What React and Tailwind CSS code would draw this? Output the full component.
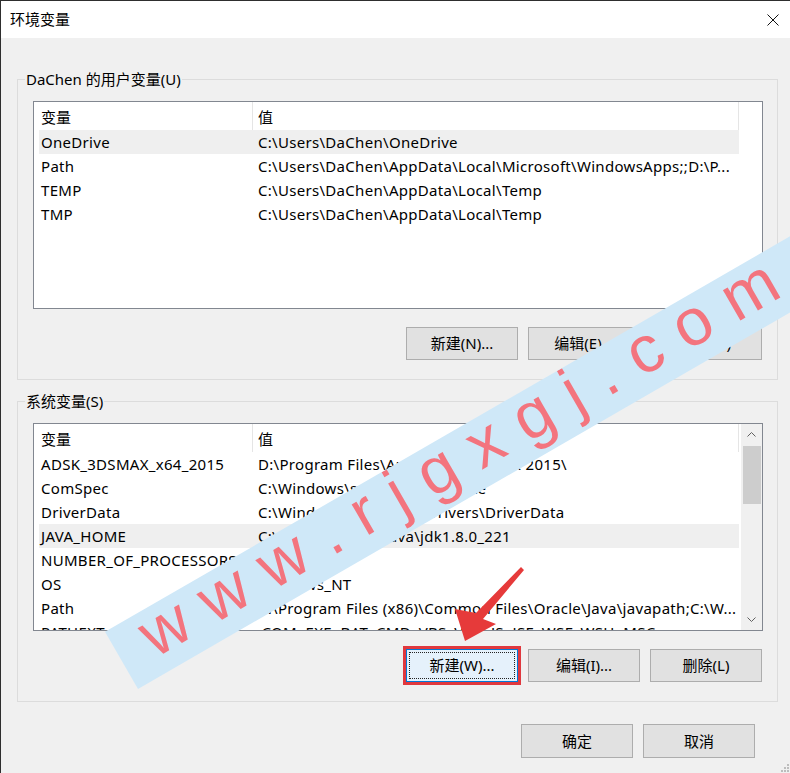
import React from "react";

const userVars = [
  ["OneDrive", "C:\\Users\\DaChen\\OneDrive"],
  ["Path", "C:\\Users\\DaChen\\AppData\\Local\\Microsoft\\WindowsApps;;D:\\P..."],
  ["TEMP", "C:\\Users\\DaChen\\AppData\\Local\\Temp"],
  ["TMP", "C:\\Users\\DaChen\\AppData\\Local\\Temp"],
];

const sysVars = [
  ["ADSK_3DSMAX_x64_2015", "D:\\Program Files\\Autodesk\\3ds Max 2015\\"],
  ["ComSpec", "C:\\Windows\\system32\\cmd.exe"],
  ["DriverData", "C:\\Windows\\System32\\Drivers\\DriverData"],
  ["JAVA_HOME", "C:\\Program Files\\Java\\jdk1.8.0_221"],
  ["NUMBER_OF_PROCESSORS", "4"],
  ["OS", "Windows_NT"],
  ["Path", "C:\\Program Files (x86)\\Common Files\\Oracle\\Java\\javapath;C:\\W..."],
  ["PATHEXT", ".COM;.EXE;.BAT;.CMD;.VBS;.VBE;.JS;.JSE;.WSF;.WSH;.MSC"],
];

const Chevron = ({ up }) => (
  <svg width="9" height="5" viewBox="0 0 9 5" className="block">
    <polyline
      points={up ? "0.5,4.5 4.5,0.5 8.5,4.5" : "0.5,0.5 4.5,4.5 8.5,0.5"}
      fill="none"
      stroke="#606060"
      strokeWidth="1"
    />
  </svg>
);

const Scrollbar = () => (
  <div className="w-[21px] h-full bg-[#f0f0f0] flex flex-col items-center">
    <div className="h-[21px] w-full flex items-center justify-center">
      <Chevron up />
    </div>
    <div className="w-[18px] h-[58px] mt-[1px] bg-[#cdcdcd]" />
    <div className="flex-1" />
    <div className="h-[21px] w-full flex items-center justify-center">
      <Chevron />
    </div>
  </div>
);

const ListView = ({ rows, selected, scroll }) => (
  <div className="h-[208px] border border-[#828790] bg-white overflow-hidden flex">
    <div className="flex-1 min-w-0">
      {/* Header */}
      <div className="flex h-[28px]">
        <div className="w-[219px] pl-[7px] pt-[2px] flex items-center border-r border-[#e5e5e5]">变量</div>
        <div className="w-[486px] pl-[5px] pt-[2px] flex items-center border-r border-[#e5e5e5]">值</div>
      </div>
      {rows.map(([name, value], i) => (
        <div
          key={name + i}
          className={`ml-[5px] w-[700px] h-[24px] flex items-center whitespace-nowrap tracking-[0.3px] ${
            i === selected ? "bg-[#efefef]" : ""
          }`}
        >
          <div className="w-[214px] pl-[2px] overflow-hidden">{name}</div>
          <div className="flex-1 pl-[5px] overflow-hidden">{value}</div>
        </div>
      ))}
    </div>
    {scroll && <Scrollbar />}
  </div>
);

const Button = ({ children, focused, className = "" }) => (
  <button
    className={`relative w-[112px] h-[33px] border ${
      focused
        ? "bg-[#e5f1fb] border-[#0078d7] outline-3 outline-[#e0383e]"
        : "bg-[#e1e1e1] border-[#adadad]"
    } ${className}`}
  >
    {focused && <span className="absolute inset-[2px] border border-dotted border-[#222]" />}
    <span className="relative">{children}</span>
  </button>
);

const GroupBox = ({ label, className = "", children }) => (
  <div className={`relative h-[301px] border border-[#dcdcdc] pl-[15px] pr-[14px] pt-[21px] ${className}`}>
    <span className="absolute -top-[12px] left-[7px] px-[1px] leading-[22px] bg-[#f0f0f0]">{label}</span>
    {children}
  </div>
);

export default function App() {
  return (
    <div className="w-[790px] h-[773px] relative overflow-hidden bg-[#f0f0f0] border-t border-l border-[#2e2e2e] text-[15px] text-black [font-family:'Noto_Sans','Noto_Sans_CJK_SC',sans-serif]">
      {/* Title bar */}
      <div className="h-[37px] bg-white flex items-center justify-between pl-[9px] pr-[11px]">
        <span className="[font-family:'Noto_Sans_CJK_SC',sans-serif]">环境变量</span>
        <svg width="12" height="12" viewBox="0 0 12 12">
          <path d="M0.5 0.5 L11.5 11.5 M11.5 0.5 L0.5 11.5" stroke="#111" strokeWidth="1" />
        </svg>
      </div>

      <div className="pl-[16px] pr-[12px] pt-[41px]">
        <GroupBox label="DaChen 的用户变量(U)">
          <ListView rows={userVars} selected={0} />
          <div className="flex justify-end gap-[10px] pr-[1px] mt-[18px]">
            <Button>新建(N)...</Button>
            <Button>编辑(E)...</Button>
            <Button>删除(D)</Button>
          </div>
        </GroupBox>

        <GroupBox label="系统变量(S)" className="mt-[21px]">
          <ListView rows={sysVars} selected={3} scroll />
          <div className="flex justify-end gap-[10px] pr-[1px] mt-[18px]">
            <Button focused>新建(W)...</Button>
            <Button>编辑(I)...</Button>
            <Button>删除(L)</Button>
          </div>
        </GroupBox>
      </div>

      <div className="flex justify-end gap-[10px] pr-[35px] mt-[22px]">
        <Button className="w-[111px] h-[34px]">确定</Button>
        <Button className="w-[111px] h-[34px]">取消</Button>
      </div>

      {/* resize grip */}
      <svg width="8" height="8" viewBox="0 0 8 8" className="absolute right-[1px] bottom-[1px]">
        {[[6, 0], [6, 3], [3, 3], [6, 6], [3, 6], [0, 6]].map(([x, y]) => (
          <rect key={`${x}-${y}`} x={x} y={y} width="2" height="2" fill="#bdbdbd" />
        ))}
      </svg>

      {/* watermark band */}
      <div className="absolute left-[137px] top-[622px] w-[900px] h-[66px] origin-bottom-left rotate-[-30deg] bg-[#cfe8f8] overflow-hidden">
        <div className="pl-[30px] -mt-[8px] text-[66px] tracking-[1px] leading-none whitespace-pre text-[#f3747e] [font-family:'Liberation_Sans',Arial,sans-serif]">
          w w w . r j g x g j . c o m
        </div>
      </div>

      {/* red arrow */}
      <svg width="790" height="773" className="absolute -left-px -top-px pointer-events-none">
        <polygon
          points="521,567 524,570 483,619 496,624 465,641 455,609 476,613"
          fill="#e63a3a"
        />
      </svg>
    </div>
  );
}
